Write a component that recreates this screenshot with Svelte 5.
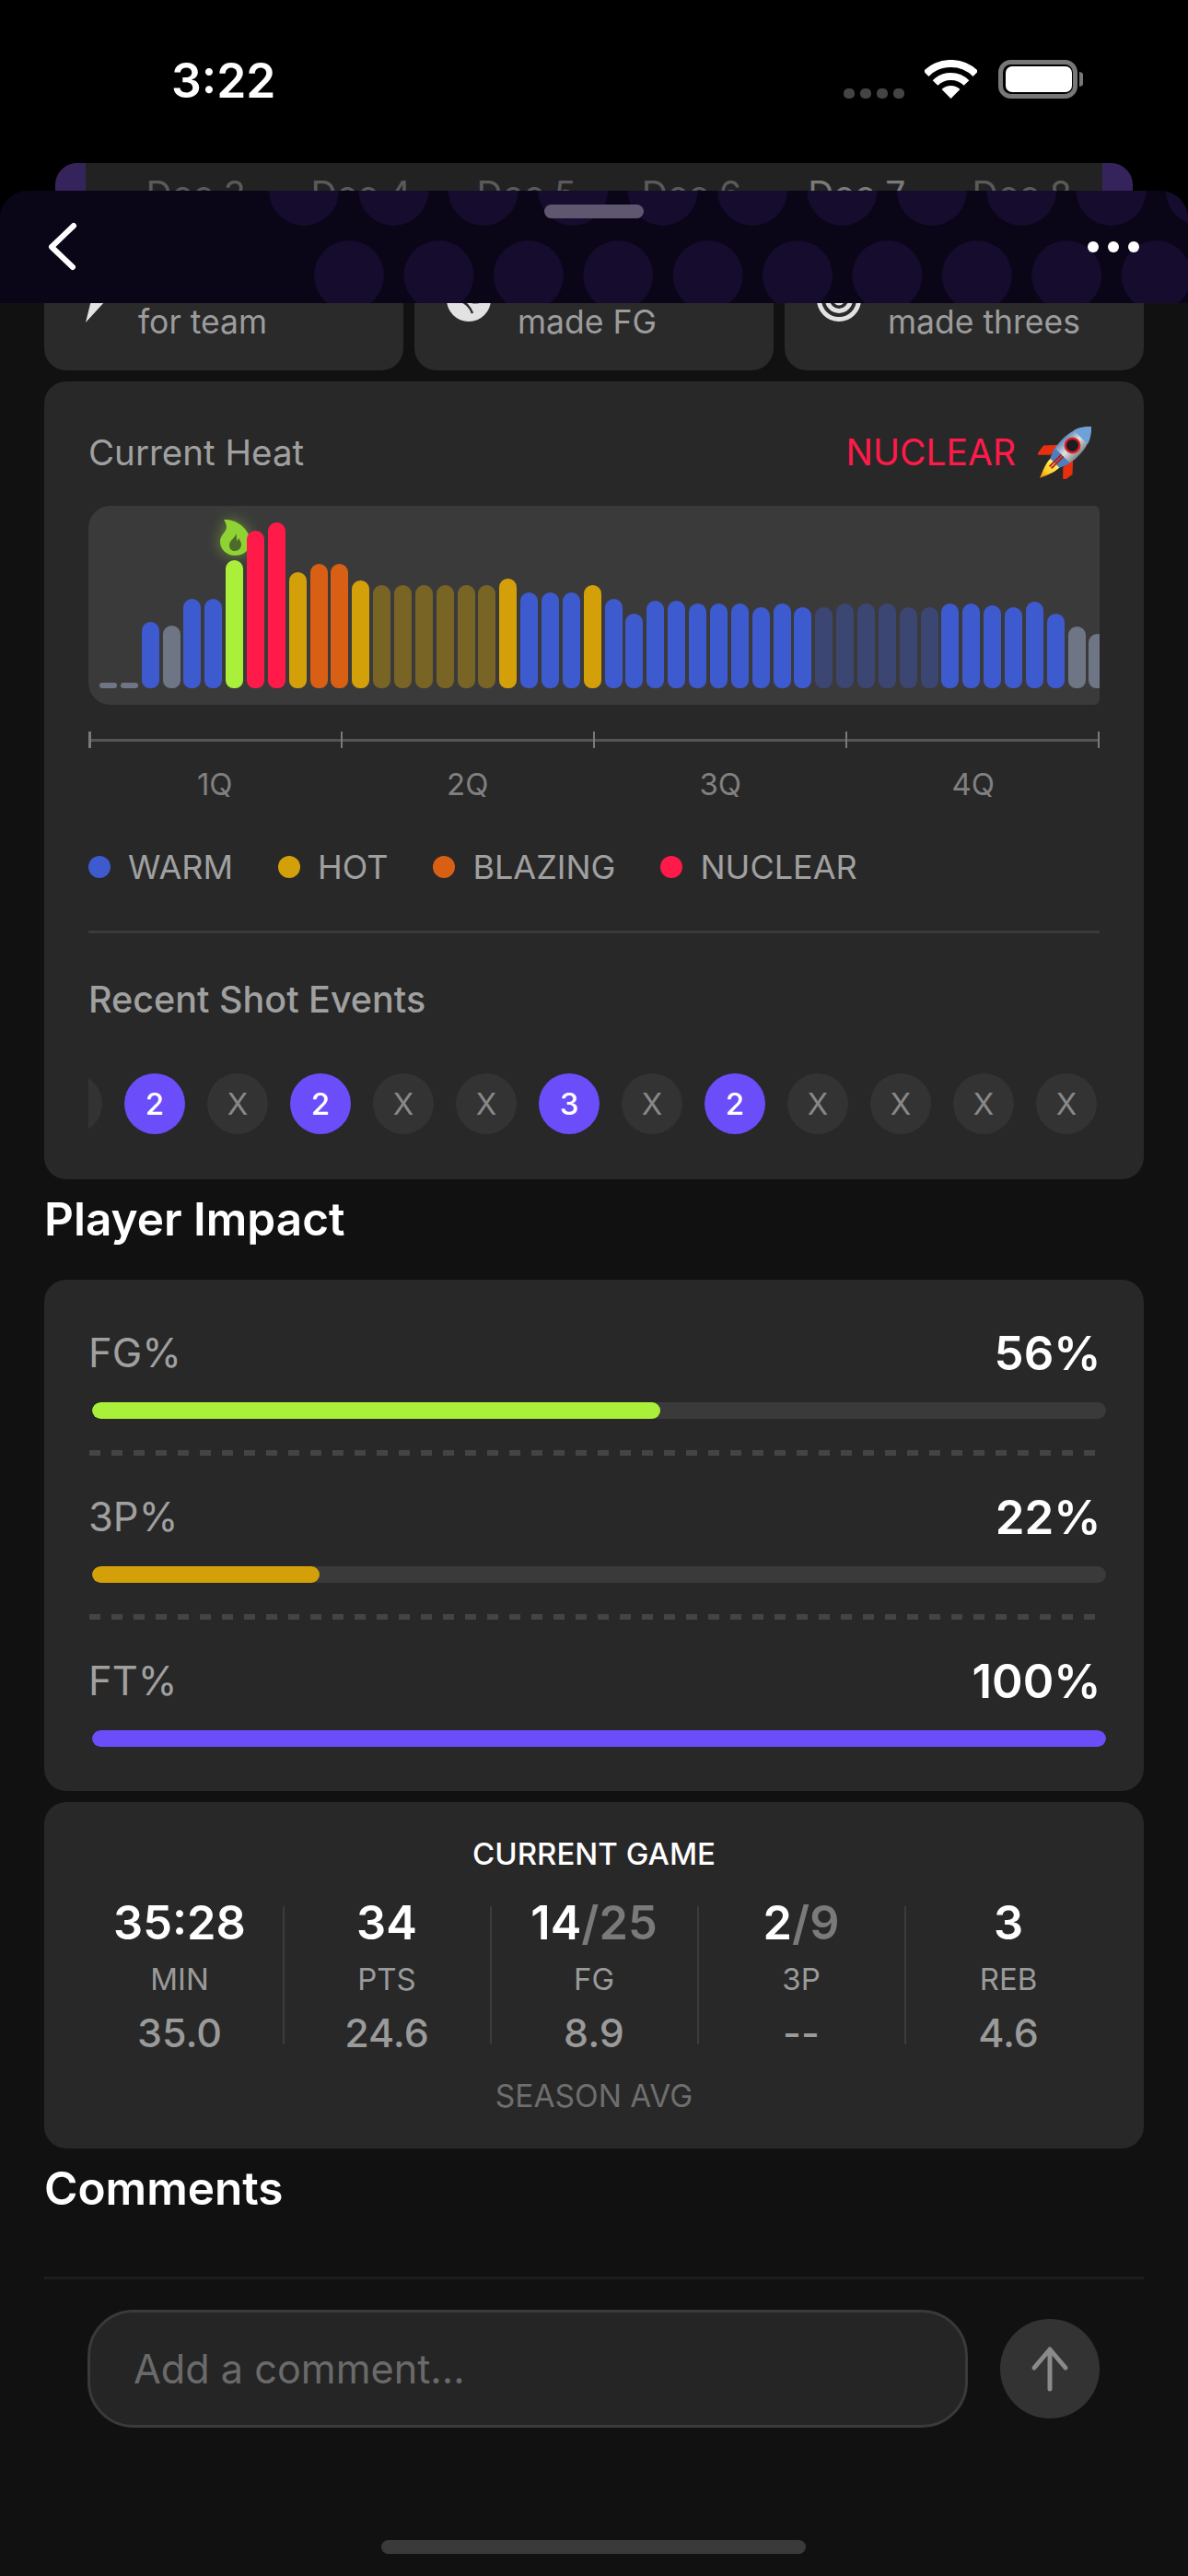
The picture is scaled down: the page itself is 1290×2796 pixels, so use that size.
<script>
  const B = '#3d5acf', G = '#6e7585', L = '#aaf03a', R = '#ff1a4a', Y = '#d4a00a', O = '#d95f14', DY = '#786425', DB = '#3c4672';
  const bars = [
    [6,G],[6,G],[72,B],[68,G],[97,B],[97,B],[139,L],[171,R],[180,R],[126,Y],[135,O],[135,O],[117,Y],
    [112,DY],[112,DY],[112,DY],[112,DY],[112,DY],[112,DY],[119,Y],[104,B],[104,B],[104,B],[112,Y],
    [97,B],[81,B],[95,B],[95,B],[92,B],[92,B],[92,B],[88,B],[92,B],[88,B],
    [88,DB],[92,DB],[92,DB],[92,DB],[88,DB],[88,DB],
    [92,B],[92,B],[90,B],[88,B],[94,B],[81,B],[67,G],[59,G]
  ];
  const dates = ['Dec 3','Dec 4','Dec 5','Dec 6','Dec 7','Dec 8'];
  const quarters = ['1Q','2Q','3Q','4Q'];
  const legend = [['WARM',B],['HOT',Y],['BLAZING',O],['NUCLEAR',R]];
  const shots = ['2','X','2','X','X','3','X','2','X','X','X','X'];
  const impact = [
    { label: 'FG%', value: '56%', pct: 56, color: L },
    { label: '3P%', value: '22%', pct: 22.4, color: Y },
    { label: 'FT%', value: '100%', pct: 100, color: '#6b4dfa' }
  ];
  const game = [
    { made: '35:28', label: 'MIN', avg: '35.0' },
    { made: '34', label: 'PTS', avg: '24.6' },
    { made: '14', att: '/25', label: 'FG', avg: '8.9' },
    { made: '2', att: '/9', label: '3P', avg: '--' },
    { made: '3', label: 'REB', avg: '4.6' }
  ];
  const row1 = Array.from({ length: 11 }, (_, i) => 330 + i * 97.4);
  const row2 = Array.from({ length: 10 }, (_, i) => 379 + i * 97.4);
</script>

<div class="phone">
  <div class="top">
    <div class="status">
      <span class="time">3:22</span>
      <div class="signal"><i></i><i></i><i></i><i></i></div>
      <svg class="wifi" width="57" height="42" viewBox="0 0 57 42" fill="none" stroke="#fff" stroke-width="8">
        <path d="M1.6 15.1A38 38 0 0 1 55.4 15.1" />
        <path d="M11.5 25A24 24 0 0 1 45.5 25" />
        <path d="M18.6 32.1L28.5 42L38.4 32.1A14 14 0 0 0 18.6 32.1Z" fill="#fff" stroke="none" />
      </svg>
      <svg class="battery" width="92" height="42" viewBox="0 0 92 42">
        <rect x="2.5" y="2.5" width="81" height="37" rx="11" fill="none" stroke="#777" stroke-width="5" />
        <rect x="8" y="7" width="72" height="28" rx="7" fill="#fff" />
        <path d="M88 13a6 8 0 0 1 0 16z" fill="#777" />
      </svg>
    </div>
    <div class="dates">
      <div class="cap"></div>
      <div class="labels">
        {#each dates as d}<span>{d}</span>{/each}
      </div>
      <div class="cap"></div>
    </div>
  </div>

  <div class="sheet">
    <svg class="dots" width="1290" height="122" viewBox="0 0 1290 122">
      {#each row1 as x}<circle cx={x} cy="0" r="38" fill="#160c2e" />{/each}
      {#each row2 as x}<circle cx={x} cy="92" r="38" fill="#160c2e" />{/each}
    </svg>
    <div class="handle"></div>
    <svg class="back" width="40" height="60" viewBox="0 0 40 60" fill="none" stroke="#fff" stroke-width="6" stroke-linecap="round" stroke-linejoin="round">
      <path d="M31 7L7 30L30 52" />
    </svg>
    <div class="more"><i></i><i></i><i></i></div>
  </div>

  <main class="content">
    <div class="stats">
      <div class="stat first">
        <svg class="bolt" width="48" height="84" viewBox="0 0 48 84">
          <path d="M25 3L2 57L16 57L10 81L32 57L20 57L36 3Z" fill="#e4e4e4" />
        </svg>
        <span>for team</span>
      </div>
      <div class="stat">
        <svg class="ico" width="48" height="48" viewBox="0 0 48 48">
          <circle cx="24" cy="24" r="24" fill="#e2e2e2" />
          <path d="M14 26C19 26 25 31 28 39M20 22C24 28 32 28 38 26" fill="none" stroke="#2a2a2b" stroke-width="2.5" />
        </svg>
        <span>made FG</span>
      </div>
      <div class="stat">
        <svg class="ico" width="48" height="48" viewBox="0 0 48 48" fill="none" stroke="#e2e2e2" stroke-width="5">
          <circle cx="24" cy="24" r="21.5" />
          <circle cx="24" cy="24" r="12.5" />
          <circle cx="24" cy="24" r="4" fill="#e2e2e2" />
        </svg>
        <span>made threes</span>
      </div>
    </div>

    <section class="card heat">
      <div class="heat-head">
        <h3>Current Heat</h3>
        <div class="level">
          <span>NUCLEAR</span>
          <svg width="60" height="58" viewBox="-30 -30 60 60">
            <defs>
              <linearGradient id="hull" x1="0" x2="1" y1="0" y2="0">
                <stop offset="0" stop-color="#5d86b8" />
                <stop offset=".5" stop-color="#dfe3e6" />
                <stop offset="1" stop-color="#7f8588" />
              </linearGradient>
              <linearGradient id="fire" x1="0" x2="0" y1="0" y2="1">
                <stop offset="0" stop-color="#fff36a" />
                <stop offset=".6" stop-color="#ffc81e" />
                <stop offset="1" stop-color="#f07a10" />
              </linearGradient>
            </defs>
            <g transform="rotate(45)">
              <path d="M-10 -2L-23 12L-21 25L-10 14Z" fill="#e8300f" />
              <path d="M10 -2L23 12L21 25L10 14Z" fill="#e8300f" />
              <path d="M-7 16C-8 24 -3 33 0 41C3 33 8 24 7 16Z" fill="url(#fire)" />
              <path d="M0 -41C9 -32 14 -20 13 -5C13 3 10 11 7 17L-7 17C-10 11 -13 3 -13 -5C-14 -20 -9 -32 0 -41Z" fill="url(#hull)" />
              <path d="M0 -41C6 -35 10 -29 11 -24L-11 -24C-10 -29 -6 -35 0 -41Z" fill="#6fa0d6" />
              <path d="M-12 5L12 5C11 10 9 14 7 17L-7 17C-9 14 -11 10 -12 5Z" fill="#4d7fc0" />
              <circle cx="0" cy="-11" r="8" fill="#1c1c22" stroke="#e21c1c" stroke-width="2.5" />
              <path d="M-1.5 5V24M1.5 5V24" stroke="#b91c14" stroke-width="2" />
            </g>
          </svg>
        </div>
      </div>

      <div class="chart">
        <svg class="flame" width="36" height="40" viewBox="0 0 36 40">
          <path d="M4 0C16 -1 30 8 33 22C34 32 26 39 16 39C7 39 0 32 0 24C0 17 6 14 7 9C7 6 6 3 4 0Z" fill="#8fd234" />
          <path d="M17 15C17 20 10 22 10 28C10 32 13 34 16 34C20 34 23 31 23 27C23 24 21 22 20 20C19 22 19 23 18 23C18 20 18 17 17 15Z" fill="#4c6b2a" />
        </svg>
        {#each bars as [h, c]}
          <div class="bar" class:flat={h < 10} style="height:{h}px;background:{c}"></div>
        {/each}
      </div>

      <div class="axis"><i></i><i></i><i></i><i></i><i></i></div>
      <div class="quarters">
        {#each quarters as q}<span>{q}</span>{/each}
      </div>

      <div class="legend">
        {#each legend as [name, c]}
          <div class="key"><i style="background:{c}"></i><span>{name}</span></div>
        {/each}
      </div>

      <div class="rule"></div>
      <h4>Recent Shot Events</h4>

      <div class="shots">
        <div class="shot ghost"></div>
        {#each shots as s}
          <div class="shot" class:made={s !== 'X'}>{s}</div>
        {/each}
      </div>
    </section>

    <h2 class="impact-title">Player Impact</h2>

    <section class="card impact">
      {#each impact as m, i}
        {#if i > 0}<div class="dash"></div>{/if}
        <div class="metric">
          <span>{m.label}</span>
          <b>{m.value}</b>
        </div>
        <div class="track"><div class="fill" style="width:{m.pct}%;background:{m.color}"></div></div>
      {/each}
    </section>

    <section class="card game">
      <div class="game-title">CURRENT GAME</div>
      <div class="cols">
        {#each game as g}
          <div class="col">
            <div class="val">{g.made}{#if g.att}<em>{g.att}</em>{/if}</div>
            <div class="lab">{g.label}</div>
            <div class="avg">{g.avg}</div>
          </div>
        {/each}
      </div>
      <div class="season">SEASON AVG</div>
    </section>

    <h2 class="comments-title">Comments</h2>
  </main>

  <div class="sep"></div>

  <div class="composer">
    <div class="input">Add a comment...</div>
    <div class="send">
      <svg width="48" height="54" viewBox="0 0 48 54" fill="none" stroke="#8a8a8a" stroke-width="5" stroke-linecap="round" stroke-linejoin="round">
        <path d="M24 49V6M7 26L24 6L41 26" />
      </svg>
    </div>
  </div>

  <div class="home"></div>
</div>

<style>
  :global(body) { margin: 0; background: #111; }
  .phone {
    position: relative;
    width: 1290px;
    height: 2796px;
    overflow: hidden;
    background: #111;
    font-family: Inter, "Liberation Sans", sans-serif;
    color: #fff;
  }
  .top { background: #000; height: 329px; overflow: hidden; }
  .status { display: flex; align-items: flex-start; height: 177px; box-sizing: border-box; padding-top: 65px; }
  .time { margin-left: 186px; width: 730px; font-size: 51.5px; line-height: 44px; font-weight: 600; }
  .signal { display: flex; gap: 6px; margin-top: 31px; width: 88px; }
  .signal i { width: 12px; height: 11px; border-radius: 5px; background: #444; }
  .wifi { margin-right: 23px; }
  .dates {
    display: flex;
    height: 152px;
    margin: 0 60px;
    background: #222;
    border-radius: 24px 24px 0 0;
    overflow: hidden;
    font-size: 39px;
    line-height: 46px;
    color: #5a5a5a;
    white-space: nowrap;
  }
  .labels { flex: 1; min-width: 0; display: flex; padding: 11px 0 0 30px; }
  .labels span { flex: none; width: 179.4px; text-align: center; }
  .labels span:nth-child(5) { color: #7a7a7a; }
  .cap { width: 33px; flex: none; background: #35245c; }

  .sheet {
    position: absolute;
    top: 207px;
    left: 0;
    width: 1290px;
    height: 122px;
    background: #0a0618;
    border-radius: 30px 30px 0 0;
    overflow: hidden;
    z-index: 5;
  }
  .dots { position: absolute; inset: 0; }
  .handle { position: absolute; left: 591px; top: 15px; width: 108px; height: 15px; border-radius: 8px; background: #5f5670; }
  .back { position: absolute; left: 49px; top: 31px; }
  .more { position: absolute; left: 1181px; top: 55px; display: flex; gap: 10.5px; }
  .more i { width: 11.5px; height: 12px; border-radius: 50%; background: #fff; }

  .content { padding: 0 48px; }
  .stats { display: grid; grid-template-columns: repeat(3, 390px); gap: 12px; margin-top: -60px; }
  .stat {
    display: flex;
    height: 133px;
    box-sizing: border-box;
    padding-left: 35px;
    gap: 29px;
    background: #2a2a2b;
    border-radius: 0 0 24px 24px;
    font-size: 35.5px;
    color: #9c9c9c;
  }
  .stat span { padding-top: 58px; line-height: 46px; }
  .stat.first { gap: 19px; }
  .bolt { margin-top: 0; }
  .ico { margin-top: 32px; }

  .card { background: #282828; border-radius: 24px; box-sizing: border-box; }
  .heat { margin-top: 12px; padding: 48px; height: 866px; }
  .heat-head { display: flex; justify-content: space-between; align-items: center; height: 57px; padding-right: 7px; }
  h3 { margin: 0; font-size: 38.5px; font-weight: 400; color: #a0a0a0; }
  .level { display: flex; align-items: center; gap: 24px; font-size: 39px; color: #ff1a4a; }
  .chart {
    position: relative;
    display: flex;
    align-items: flex-end;
    gap: 3.87px;
    height: 216px;
    box-sizing: border-box;
    margin-top: 30px;
    padding: 0 0 18px 12px;
    background: #3a3a3a;
    border-radius: 24px 6px 6px 24px;
    overflow: hidden;
  }
  .flame { position: absolute; left: 143px; top: 15px; filter: drop-shadow(0 0 8px rgba(170, 240, 58, .45)); }
  .bar { position: relative; flex: none; width: 19px; border-radius: 10px 10px 9px 9px; }
  .bar.flat { border-radius: 3px; }
  .axis {
    display: flex;
    justify-content: space-between;
    height: 18px;
    margin-top: 29px;
    background: linear-gradient(#555, #555) center / 100% 3px no-repeat;
  }
  .axis i { width: 2.5px; background: #7a7a7a; }
  .quarters { display: grid; grid-template-columns: repeat(4, 1fr); margin-top: 19px; font-size: 33px; line-height: 40px; color: #808080; text-align: center; }
  .legend { display: flex; gap: 49px; margin-top: 50px; font-size: 36px; line-height: 40px; color: #a0a0a0; }
  .key { display: flex; align-items: center; gap: 19px; }
  .key i { width: 24px; height: 24px; border-radius: 50%; }
  .rule { height: 3px; margin-top: 49px; background: #3a3a3a; }
  h4 { margin: 48px 0 0; font-size: 39.5px; line-height: 48px; font-weight: 500; color: #a0a0a0; }
  .shots { display: flex; gap: 24px; margin-top: 56px; overflow: hidden; padding-left: 0; }
  .shot {
    flex: none;
    display: flex;
    align-items: center;
    justify-content: center;
    width: 66px;
    height: 66px;
    border-radius: 50%;
    background: #333;
    font-size: 33px;
    color: #888;
  }
  .shot.ghost { margin-left: -51px; }
  .shot.made { background: #6b4dfa; color: #fff; font-weight: 500; }

  h2 { margin: 0; font-size: 49.5px; line-height: 60px; font-weight: 600; }
  .impact-title { margin: 13px 0 36px; }
  .impact { height: 555px; padding: 48px; }
  .metric { display: flex; justify-content: space-between; align-items: center; height: 60px; margin-right: -1.5px; }
  .metric span { font-size: 43.5px; color: #a0a0a0; }
  .metric b { font-size: 51px; font-weight: 600; }
  .track { height: 18px; margin: 24px -7px 0 4px; background: #3a3a3a; border-radius: 9px; overflow: hidden; }
  .fill { height: 100%; border-radius: 9px; }
  .dash {
    height: 6px;
    margin: 34px 3px 36px 1px;
    background: repeating-linear-gradient(90deg, #444 0 12px, transparent 12px 24px);
  }
  .metric:first-child { margin-top: 1px; }
  .game { margin-top: 12px; height: 376px; padding: 36px 34.5px 0; }
  .game-title { font-size: 33px; line-height: 40px; font-weight: 500; text-align: center; }
  .cols { display: grid; grid-template-columns: repeat(5, 1fr); margin-top: 30px; }
  .col { position: relative; text-align: center; }
  .col + .col::before {
    content: '';
    position: absolute;
    left: -1px;
    top: 7px;
    bottom: 12px;
    width: 2px;
    background: #3c3c3c;
  }
  .val { font-size: 50.5px; line-height: 50px; font-weight: 600; white-space: nowrap; }
  .val em { font-style: normal; color: #7a7a7a; }
  .lab { margin-top: 16px; font-size: 33px; line-height: 40px; color: #9a9a9a; }
  .avg { margin-top: 13px; font-size: 43px; line-height: 50px; font-weight: 500; color: #9a9a9a; }
  .season { margin-top: 24px; font-size: 33.5px; line-height: 40px; text-align: center; color: #6e6e6e; }
  .comments-title { margin-top: 13px; }
  .sep { height: 3px; margin: 66px 48px 0; background: #1e1e1e; }
  .composer { display: flex; align-items: center; gap: 35px; margin: 33px 96px 0 95px; }
  .input {
    flex: 1;
    height: 128px;
    box-sizing: border-box;
    padding-left: 47px;
    display: flex;
    align-items: center;
    background: #252525;
    border: 3px solid #3a3a3a;
    border-radius: 50px;
    font-size: 43.2px;
    color: #6a6a6a;
  }
  .send { flex: none; display: flex; align-items: center; justify-content: center; width: 108px; height: 108px; border-radius: 50%; background: #333; }
  .home { width: 461px; height: 15px; margin: 122px 0 0 414px; border-radius: 8px; background: #3a3a3a; }
</style>
